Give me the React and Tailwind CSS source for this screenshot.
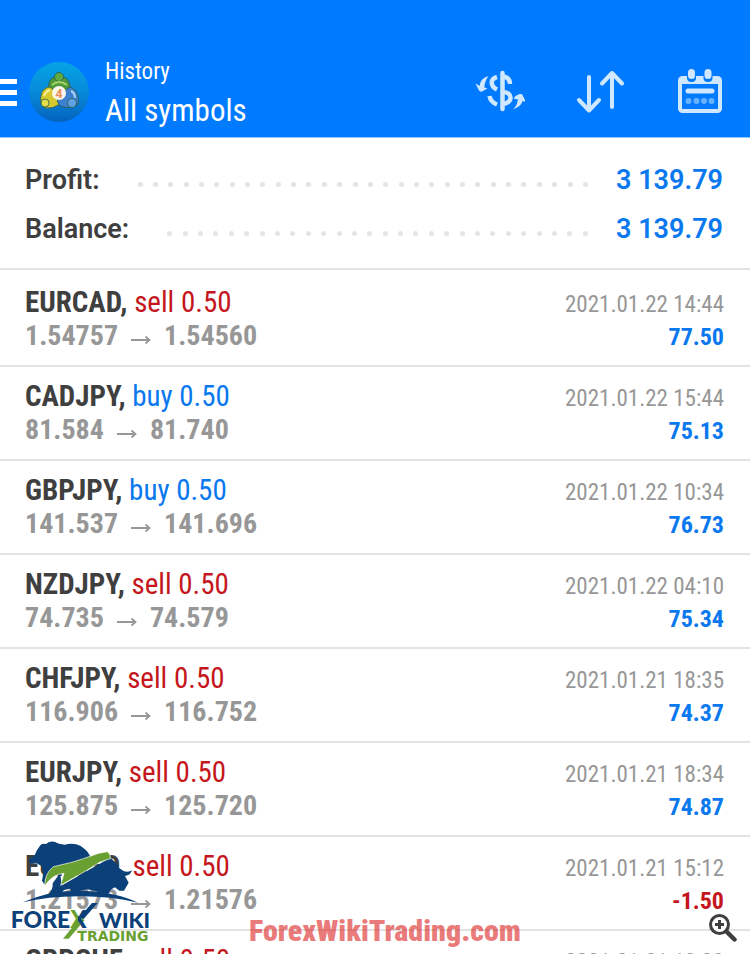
import React from 'react';

const summary = [
  { label: 'Profit:', value: '3 139.79', dots: 30 },
  { label: 'Balance:', value: '3 139.79', dots: 28 },
];

const deals = [
  { symbol: 'EURCAD', side: 'sell', lots: '0.50', open: '1.54757', close: '1.54560', time: '2021.01.22 14:44', profit: '77.50' },
  { symbol: 'CADJPY', side: 'buy', lots: '0.50', open: '81.584', close: '81.740', time: '2021.01.22 15:44', profit: '75.13' },
  { symbol: 'GBPJPY', side: 'buy', lots: '0.50', open: '141.537', close: '141.696', time: '2021.01.22 10:34', profit: '76.73' },
  { symbol: 'NZDJPY', side: 'sell', lots: '0.50', open: '74.735', close: '74.579', time: '2021.01.22 04:10', profit: '75.34' },
  { symbol: 'CHFJPY', side: 'sell', lots: '0.50', open: '116.906', close: '116.752', time: '2021.01.21 18:35', profit: '74.37' },
  { symbol: 'EURJPY', side: 'sell', lots: '0.50', open: '125.875', close: '125.720', time: '2021.01.21 18:34', profit: '74.87' },
  { symbol: 'EURUSD', side: 'sell', lots: '0.50', open: '1.21573', close: '1.21576', time: '2021.01.21 15:12', profit: '-1.50' },
  { symbol: 'GBPCHF', side: 'sell', lots: '0.50', open: '1.21540', close: '1.21388', time: '2021.01.21 13:03', profit: '85.20' },
];

const AppLogo = () => (
  <svg viewBox="0 0 62 62" className="h-[62px] w-[62px] shrink-0">
    <defs>
      <linearGradient id="disc" x1="0" y1="0" x2="0" y2="1">
        <stop offset="0" stopColor="#06a4e6" />
        <stop offset="0.5" stopColor="#078ad8" />
        <stop offset="1" stopColor="#0462bd" />
      </linearGradient>
    </defs>
    <circle cx="31" cy="31" r="30" fill="url(#disc)" />
    <g stroke="#2b5a4c" strokeWidth="0.8">
      <path d="M21 31 Q19 19 26 16 H36 Q43 19 42 30 L36 35 H26 Z" fill="#4f9a3c" />
      <circle cx="31" cy="16" r="4.500" fill="#5fab42" />
      <path d="M13 43 Q11 29 20 26 Q26 26 27 34 L32 43 Q25 48 17 47 Z" fill="#d6c92f" />
      <circle cx="17" cy="42" r="4" fill="#e2dc4a" />
      <path d="M35 33 Q40 23 46 28 Q52 34 50 43 Q42 49 32 45 L29 40 Z" fill="#3d80cf" />
      <circle cx="44" cy="42" r="4.500" fill="#5ea2e4" />
    </g>
    <path d="M24 24 Q31 18 39 24" fill="none" stroke="#a5d468" strokeWidth="2" />
    <path d="M16 35 Q18 30 22 29" fill="none" stroke="#f8f299" strokeWidth="2" />
    <path d="M43 30 Q47 32 47 37" fill="none" stroke="#a8d2f5" strokeWidth="2" />
    <circle cx="31" cy="32" r="7" fill="#fbf7ee" />
    <text x="31" y="37" textAnchor="middle" fontSize="13" fontWeight="700" fill="#e8905a" fontFamily="Roboto, sans-serif">4</text>
  </svg>
);

const CurrencyIcon = () => (
  <svg viewBox="0 0 50 50" className="h-[50px] w-[50px]" fill="none" stroke="currentColor" strokeWidth="4.500">
    <path d="M27.500 6 V42" strokeLinecap="round" />
    <path d="M22 10 C15 12 15 19 22 22.500" />
    <path d="M29 9.500 Q35 11 35 17" />
    <path d="M14.500 29 Q15.500 35 22 37.500" />
    <path d="M28 25 C38 25.500 38 35 28 37" />
    <path d="M13.500 9 Q5 11 4.500 20 L9.500 22 Q9 15 13.500 9 Z" fill="currentColor" stroke="none" />
    <path d="M0.500 16.500 L4 23.500 Q5 25 7 24.500 L12.500 21.500 L5 19 Z" fill="currentColor" stroke="none" />
    <path d="M38 42.500 Q48 39 48 31 L43 30 Q43.500 37 38 42.500 Z" fill="currentColor" stroke="none" />
    <path d="M38.500 31.500 L40.500 29 L44.500 27 Q47 26.500 47.500 28 L51 35 L45 33 Z" fill="currentColor" stroke="none" />
  </svg>
);

const SortIcon = () => (
  <svg
    viewBox="0 0 50 50"
    className="h-[50px] w-[50px]"
    fill="none"
    stroke="currentColor"
    strokeWidth="4"
    strokeLinecap="round"
    strokeLinejoin="round"
  >
    <path d="M14 10 V43 M4 33 L14 43.500 L24 33" />
    <path d="M37 40 V6 M27 16.500 L37 6 L47 16.500" />
  </svg>
);

const CalendarIcon = () => (
  <svg viewBox="0 0 50 50" className="h-[50px] w-[50px]">
    <rect x="5" y="11" width="40" height="33" rx="2.500" fill="none" stroke="currentColor" strokeWidth="4" />
    <path d="M5 10 H45 V17 H5 Z" fill="currentColor" />
    <path d="M12 8 V11 Q12 15 16.500 15 Q21 15 21 11 V8 Z M28.500 8 V11 Q28.500 15 33 15 Q37.500 15 37.500 11 V8 Z" fill="#007bff" />
    <rect x="13" y="2" width="7" height="10" rx="3.500" fill="currentColor" />
    <rect x="29.500" y="2" width="7" height="10" rx="3.500" fill="currentColor" />
    <path d="M13 24 H37" stroke="currentColor" strokeWidth="5" strokeLinecap="round" />
    <g fill="currentColor" opacity="0.5">
      <circle cx="13.500" cy="34" r="3" />
      <circle cx="21.500" cy="34" r="3" />
      <circle cx="29" cy="34" r="3" />
      <circle cx="36.500" cy="34" r="3" />
    </g>
  </svg>
);

const BrandLogo = () => (
  <svg
    viewBox="24 30 432 312"
    role="img"
    aria-label="Forex Wiki Trading"
    className="pointer-events-none absolute bottom-[10px] left-2 h-[104px] w-[144px]"
  >
    <defs>
      <linearGradient id="split" x1="0" y1="0" x2="1" y2="0">
        <stop offset="0.5" stopColor="#69a032" />
        <stop offset="0.5" stopColor="#0b4078" />
      </linearGradient>
    </defs>
    {/* bear */}
    <path
      fill="#0b4078"
      d="M86 94 L92 84 L104 76 L110 62 L118 50 Q124 38 138 42 Q148 31 166 36 Q175 43 194 44 Q228 36 250 54 Q266 65 271 82 L240 96 L190 108 L160 118 L140 140 L134 164 L126 152 L130 128 L124 108 L108 98 L95 102 Z"
    />
    {/* bull */}
    <path
      fill="#0b4078"
      d="M186 166 L262 122 L330 84 Q350 96 357 114 L372 124 Q388 127 396 121 Q392 136 375 138 L386 158 L372 182 L358 182 L345 172 L334 178 L322 194 L302 194 L290 184 L262 178 L240 182 L248 198 L218 198 L210 176 L192 180 L178 198 L144 194 Q160 180 158 160 L180 130 Z"
    />
    <path
      fill="#69a032"
      stroke="#ffffff"
      strokeWidth="2"
      d="M134 168 Q134 130 160 110 L215 97 L250 86 L296 70 L322 65 Q334 74 331 86 L300 96 L262 120 L182 166 L192 130 Q158 132 134 168 Z"
    />
    <path fill="#0b4078" d="M68 217 Q150 180 245 182 Q350 186 414 218 Q330 199 245 199 Q150 198 68 217 Z" />
    <path d="M293 219 L276 219 L238 262 L250 268 Z" fill="#0b4078" />
    <path d="M240 264 L254 270 L206 326 L189 326 Z" fill="#69a032" />
    <g fontFamily="Lato, sans-serif" fontWeight="900">
      <text x="32" y="293" fontSize="69" fill="#0b4078">FORE</text>
      <text x="211" y="293" fontSize="72" fill="url(#split)">X</text>
      <text x="297" y="293" fontSize="65" fill="#0b4078">WIKI</text>
    </g>
    <text x="232" y="332" fontSize="42" fontWeight="700" fill="#69a032" fontFamily="DejaVu Sans, sans-serif">TRADING</text>
  </svg>
);

const Header = () => (
  <header className="flex items-center border-b border-[#8fc5ff] bg-[#007bff] pt-[47px] pr-[25px] text-white">
    <button aria-label="Menu" className="flex w-[17px] shrink-0 flex-col gap-[6px]">
      <span className="h-[5px] w-full bg-white" />
      <span className="h-[5px] w-full bg-white" />
      <span className="h-[5px] w-full bg-white" />
    </button>
    <div className="ml-[11px]">
      <AppLogo />
    </div>
    <div className="ml-[15px] flex-1 py-[6px]">
      <p className="text-[23px] leading-[38px]">History</p>
      <h1 className="text-[31px] leading-[40px]">All symbols</h1>
    </div>
    <div className="flex gap-[50px] text-[#cfe8ff]">
      <button aria-label="Currency"><CurrencyIcon /></button>
      <button aria-label="Sort"><SortIcon /></button>
      <button aria-label="Period"><CalendarIcon /></button>
    </div>
  </header>
);

const Deal = ({ deal }) => (
  <li className="border-b-2 border-[#e2e2e2] py-3 pr-[26px] pl-[25px]">
    <div className="flex h-[34px] items-baseline justify-between leading-[34px]">
      <p className="text-[29px]">
        <span className="font-bold text-[#3f3f3f]">{deal.symbol}, </span>
        <span className={deal.side === 'sell' ? 'text-[#c4161c]' : 'text-[#0a78ee]'}>
          {deal.side} {deal.lots}
        </span>
      </p>
      <time className="text-[23px] text-[#979797]">{deal.time}</time>
    </div>
    <div className="flex h-[34px] items-baseline justify-between leading-[34px] font-bold">
      <p className="flex items-baseline text-[28px] text-[#979797]">
        {deal.open}
        <svg viewBox="0 0 20 10" className="mx-[13px] h-[10px] w-5" fill="none" stroke="currentColor" strokeWidth="1.800">
          <path d="M0 5 H18 M14.500 1.500 L18.500 5 L14.500 8.500" />
        </svg>
        {deal.close}
      </p>
      <span className={`text-[24px] ${deal.profit.startsWith('-') ? 'text-[#c4161c]' : 'text-[#0a78ee]'}`}>
        {deal.profit}
      </span>
    </div>
  </li>
);

const App = () => {
  return (
    <div className="relative h-screen overflow-hidden bg-white font-['Roboto_Condensed',Roboto,sans-serif]">
      <Header />

      <dl className="border-b-2 border-[#e2e2e2] pt-[18px] pr-[27px] pb-[14px] pl-[25px] font-[Roboto,sans-serif] text-[27px] leading-[49px]">
        {summary.map((row) => (
          <div key={row.label} className="flex items-center">
            <dt className="font-semibold text-[#3f3f3f]">{row.label}</dt>
            <dd className="flex flex-1 items-center font-semibold text-[#0a78ee]">
              <span aria-hidden="true" className="mt-2 mr-7 ml-[38px] flex flex-1 justify-between">
                {Array.from({ length: row.dots }, (_, i) => (
                  <span key={i} className="h-[5px] w-[5px] rounded-full bg-[#e4e4e4]" />
                ))}
              </span>
              {row.value}
            </dd>
          </div>
        ))}
      </dl>

      <ul className="pt-[3px]">
        {deals.map((deal) => (
          <Deal key={deal.symbol} deal={deal} />
        ))}
      </ul>

      <BrandLogo />
      <p className="pointer-events-none absolute bottom-[6px] left-[249px] text-[30px] leading-[34px] font-black text-[#dd2222]/60">
        ForexWikiTrading.com
      </p>
      <button aria-label="Zoom in" className="absolute right-[13px] bottom-3 text-[#3f3f3f]">
        <svg viewBox="0 0 28 28" className="h-7 w-7" fill="none" stroke="currentColor">
          <circle cx="10.500" cy="10.500" r="9" fill="#ffffff" strokeWidth="3" />
          <path d="M10.500 6 V15 M6 10.500 H15" strokeWidth="3" />
          <path d="M18 18 L25.500 25.500" strokeWidth="4.500" strokeLinecap="round" />
        </svg>
      </button>
    </div>
  );
};

export default App;
